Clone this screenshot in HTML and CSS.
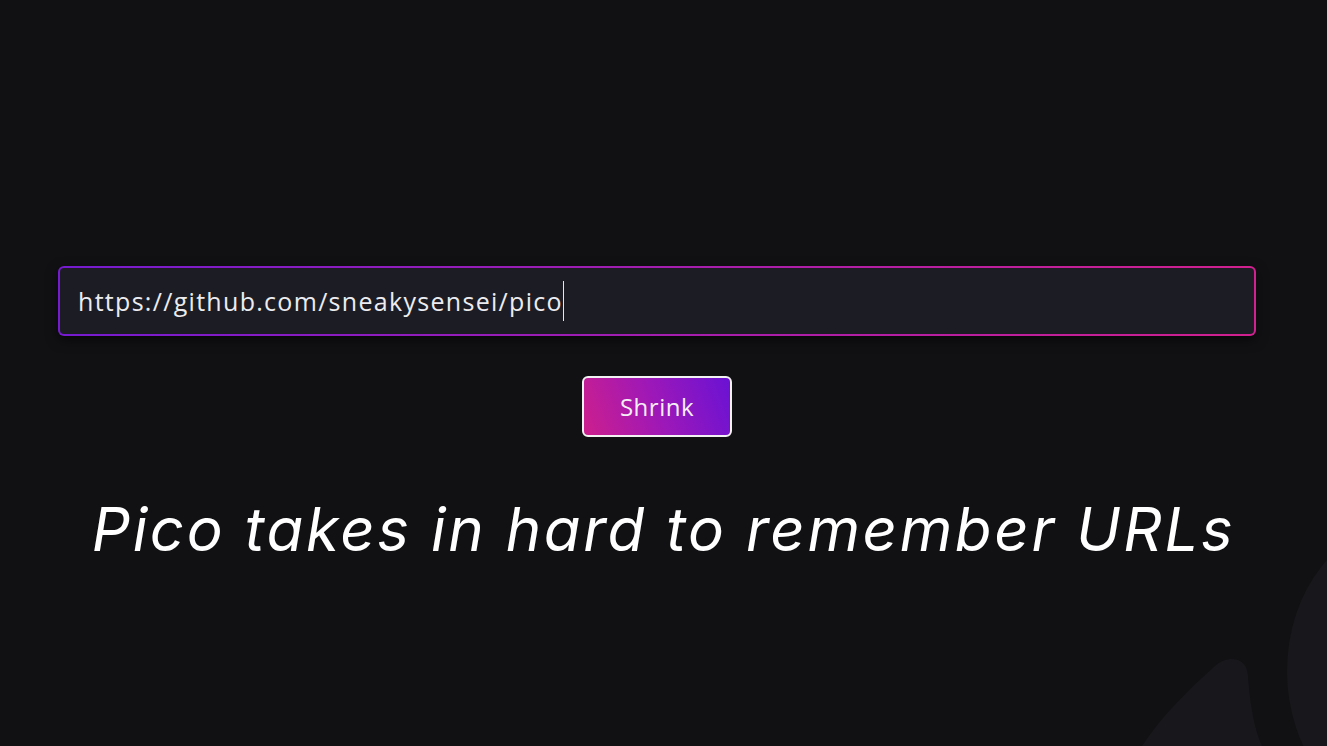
FILE: index.html
```html
<!DOCTYPE html>
<html lang="en">
<head>
<meta charset="utf-8">
<title>Pico</title>
<link rel="stylesheet" href="styles.css">
</head>
<body>
<svg class="bg-shapes" width="240" height="200" viewBox="0 0 240 200" aria-hidden="true">
  <path class="blob" d="M55 200 C75 170 100 145 128 120 C140 109 160 110 161 130 C163 160 168 185 175 200 Z"/>
  <ellipse class="orb" cx="320" cy="125" rx="120" ry="149"/>
</svg>
<main class="page">
  <label class="field">
    <span class="field-value">https://github.com/sneakysensei/pico</span><span class="caret"></span>
  </label>
  <button class="shrink" type="button">Shrink</button>
  <h1 class="tagline">Pico takes in hard to remember URLs</h1>
</main>
</body>
</html>
```

FILE: styles.css
```css
* { box-sizing: border-box; }
html, body { height: 100%; }
body {
  margin: 0;
  background: #111013;
  color: #fff;
  overflow: hidden;
  position: relative;
}
.bg-shapes {
  position: absolute;
  right: 0;
  bottom: 0;
  z-index: 0;
}
.bg-shapes .blob, .bg-shapes .orb { fill: #18181c; }
.page {
  position: relative;
  z-index: 1;
  display: flex;
  flex-direction: column;
  align-items: center;
  padding: 266px 71px 0 58px;
}
.field {
  display: flex;
  align-items: center;
  width: 100%;
  height: 70px;
  padding: 0 18px;
  border: 2px solid transparent;
  border-radius: 6px;
  background:
    linear-gradient(#1c1c24, #1c1c24) padding-box,
    linear-gradient(90deg, #761bd0, #d1208f) border-box;
  box-shadow: 0 4px 12px rgba(0, 0, 0, 0.55);
  font-family: "Open Sans", "Lato", sans-serif;
  font-size: 25px;
  color: #ececf0;
}
.field-value { letter-spacing: 1.3px; }
.caret {
  display: inline-block;
  width: 1px;
  height: 40px;
  background: #e6e6e6;
  margin-left: 0;
}
.shrink {
  margin-top: 40px;
  width: 150px;
  height: 61px;
  border: 2px solid #f2f2f2;
  border-radius: 6px;
  background: linear-gradient(70deg, #cd1f8d 0%, #9d18b8 50%, #6a12d4 100%);
  color: #f4eef6;
  font-family: "Open Sans", "Lato", sans-serif;
  font-size: 24px;
  letter-spacing: 0.5px;
  padding: 0;
}
.tagline {
  margin: 56px 0 0 13px;
  font-family: "Inter", "Liberation Sans", sans-serif;
  font-style: italic;
  font-weight: 400;
  font-size: 60px;
  letter-spacing: 2.6px;
  line-height: 1.2;
  color: #fff;
  white-space: nowrap;
}
```
